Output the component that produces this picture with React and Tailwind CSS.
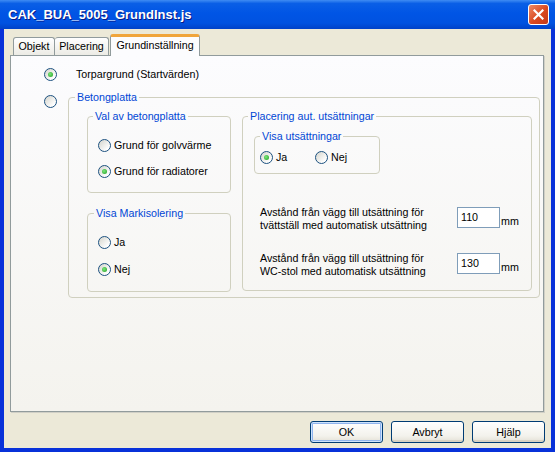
import React from 'react';

const Radio = ({ checked }) => (
  <span className="w-[13px] h-[13px] shrink-0 rounded-full border border-[#1c5180] bg-[linear-gradient(135deg,#d4d4cc,#ffffff_80%)] flex items-center justify-center">
    {checked && (
      <span className="w-[5px] h-[5px] rounded-full bg-[radial-gradient(circle_at_40%_40%,#7ce67c,#1f9e1f)]" />
    )}
  </span>
);

const Option = ({ checked, label, className = '' }) => (
  <div className={`flex items-center h-[14px] gap-[3px] ${className}`}>
    <Radio checked={checked} />
    <span>{label}</span>
  </div>
);

const Group = ({ label, className = '', legendClass = '', children }) => (
  <fieldset className={`border border-[#d0d0bf] rounded-[4px] ${className}`}>
    <legend className={`px-[2px] leading-[13px] text-[#0046d5] ${legendClass}`}>{label}</legend>
    {children}
  </fieldset>
);

const Field = ({ lines, value }) => (
  <div className="flex items-start">
    <div className="w-[197px]">
      {lines.map(l => (
        <div key={l}>{l}</div>
      ))}
    </div>
    <div className="mt-[1px] w-[43px] h-[21px] border border-[#7f9db9] bg-white pl-[3px] flex items-center">{value}</div>
    <span className="self-end mb-[4px] ml-[1px]">mm</span>
  </div>
);

const XpButton = ({ label, isDefault }) => (
  <button
    className={`w-[73px] h-[22px] rounded-[3px] border border-[#003c74] bg-[linear-gradient(to_bottom,#ffffff,#f3f2ec_70%,#e3e0d5)] text-black ${
      isDefault ? 'shadow-[inset_0_0_0_1px_#cee3fc,inset_0_0_0_2px_#8fb4ee]' : 'shadow-[inset_0_-2px_0_#d8d2c4]'
    }`}
  >
    {label}
  </button>
);

export default function App() {
  return (
    <div className="w-[555px] h-[452px] flex flex-col bg-[#0831d9] font-['Liberation_Sans',Arial,sans-serif] text-[10.7px] leading-[13px] text-black">
      {/* Title bar */}
      <div className="h-[29px] shrink-0 flex items-center justify-between pl-[8px] pr-[6px] bg-[linear-gradient(to_bottom,#3f8cf3_0%,#0a5fe6_12%,#0055e5_45%,#0052e0_80%,#0042c8_100%)]">
        <span className="text-white font-bold text-[13px] [text-shadow:1px_1px_#0a1883]">CAK_BUA_5005_GrundInst.js</span>
        <div className="w-[21px] h-[21px] rounded-[3px] border border-white bg-[linear-gradient(135deg,#ef8a66,#d9481f_55%,#c2391a)] flex items-center justify-center">
          <svg width="11" height="11" viewBox="0 0 11 11">
            <path d="M1.5 1.5 L9.5 9.5 M9.5 1.5 L1.5 9.5" stroke="white" strokeWidth="2.2" strokeLinecap="square" />
          </svg>
        </div>
      </div>

      {/* Body */}
      <div className="flex-1 mx-[4px] mb-[4px] bg-[#ece9d8] flex flex-col">
        {/* Tabs */}
        <div className="h-[26px] flex items-end pl-[9px]">
          <div className="w-[42px] h-[18px] border border-b-0 border-[#919b9c] rounded-t-[3px] bg-[linear-gradient(to_bottom,#ffffff,#ecebe5)] flex items-center justify-center">
            Objekt
          </div>
          <div className="w-[54px] h-[18px] border border-b-0 border-l-0 border-[#919b9c] rounded-t-[3px] bg-[linear-gradient(to_bottom,#ffffff,#ecebe5)] flex items-center justify-center">
            Placering
          </div>
          <div className="relative z-10 ml-[1px] mb-[-1px] w-[90px] h-[22px] border border-b-0 border-[#919b9c] border-t-[3px] border-t-[#f0a53c] rounded-t-[3px] bg-[#fcfcfe] flex items-center justify-center pb-[2px]">
            Grundinställning
          </div>
        </div>

        {/* Panel */}
        <div className="ml-[6px] mr-[7px] h-[357px] border border-[#919b9c] shadow-[1px_1px_0_#d0cfc6] bg-[linear-gradient(to_bottom,#fcfcfe,#f4f3ee)]">
          <div className="pt-[11px] pl-[33px]">
            <div className="flex items-center h-[14px]">
              <Radio checked />
              <span className="ml-[19px]">Torpargrund (Startvärden)</span>
            </div>

            <div className="flex mt-[10px]">
              <div className="mt-[4px]">
                <Radio />
              </div>
              <Group label="Betongplatta" className="ml-[11px] w-[472px] h-[207px]" legendClass="ml-[6px]">
                <div className="flex pt-[6px] pl-[18px] gap-[11px]">
                  <div className="w-[144px] flex flex-col">
                    <Group label="Val av betongplatta" className="h-[83px]" legendClass="ml-[5px]">
                      <div className="pt-[15px] pl-[10px] flex flex-col gap-[12px]">
                        <Option label="Grund för golvvärme" />
                        <Option checked label="Grund för radiatorer" />
                      </div>
                    </Group>
                    <Group label="Visa Markisolering" className="mt-[14px] h-[85px]" legendClass="ml-[6px]">
                      <div className="pt-[15px] pl-[10px] flex flex-col gap-[13px]">
                        <Option label="Ja" />
                        <Option checked label="Nej" />
                      </div>
                    </Group>
                  </div>

                  <Group label="Placering aut. utsättningar" className="w-[290px] h-[181px]" legendClass="ml-[5px]">
                    <Group label="Visa utsättningar" className="mt-[7px] ml-[11px] w-[126px] h-[44px]" legendClass="ml-[5px]">
                      <div className="flex pt-[7px] pl-[5px]">
                        <Option checked label="Ja" className="w-[55px]" />
                        <Option label="Nej" />
                      </div>
                    </Group>
                    <div className="mt-[32px] pl-[17px] flex flex-col gap-[20px]">
                      <Field
                        lines={['Avstånd från vägg till utsättning för', 'tvättställ med automatisk utsättning']}
                        value="110"
                      />
                      <Field
                        lines={['Avstånd från vägg till utsättning för', 'WC-stol med automatisk utsättning']}
                        value="130"
                      />
                    </div>
                  </Group>
                </div>
              </Group>
            </div>
          </div>
        </div>

        {/* Buttons */}
        <div className="mt-[9px] flex justify-end gap-[8px] pr-[6px]">
          <XpButton label="OK" isDefault />
          <XpButton label="Avbryt" />
          <XpButton label="Hjälp" />
        </div>
      </div>
    </div>
  );
}
